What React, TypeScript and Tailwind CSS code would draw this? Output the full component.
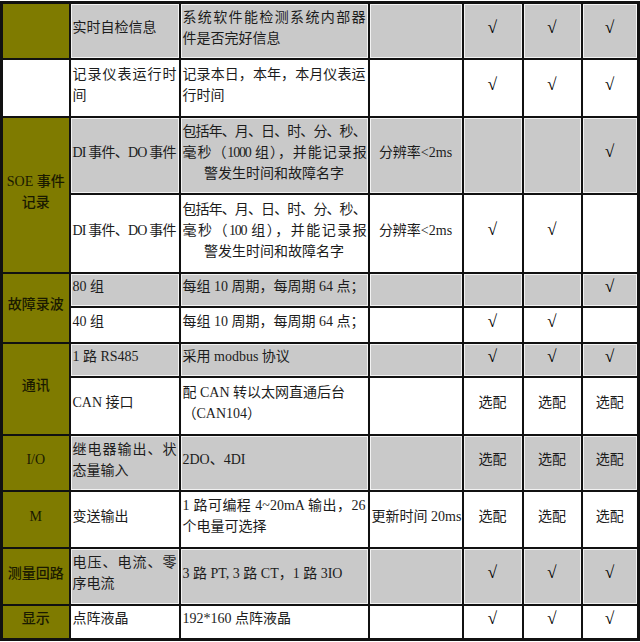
import type { ReactNode } from "react";

// Full-width line, justified to the cell edges.
const J = ({ children, tight }: { children: ReactNode; tight?: boolean }) => (
    <span
        className={`block whitespace-nowrap text-justify [text-align-last:justify] ${tight ? "tracking-[-1.2px]" : ""}`}
    >
        {children}
    </span>
);

const L = ({ children }: { children: ReactNode }) => <span className="block">{children}</span>;

const DiDo = () => <span className="block whitespace-nowrap tracking-[-0.8px]">DI 事件、DO 事件</span>;

type Row = {
    h: string;
    gray: boolean;
    head?: { text: ReactNode; span: number } | "blank";
    name: ReactNode;
    desc: ReactNode;
    note?: ReactNode;
    marks: string[];
};

const rows: Row[] = [
    {
        h: "h-[56px]",
        gray: true,
        head: { text: "", span: 1 },
        name: "实时自检信息",
        desc: (
            <>
                <J>系统软件能检测系统内部器</J>
                <L>件是否完好信息</L>
            </>
        ),
        marks: ["√", "√", "√"],
    },
    {
        h: "h-[58px]",
        gray: false,
        head: "blank",
        name: (
            <>
                <J>记录仪表运行时</J>
                <L>间</L>
            </>
        ),
        desc: (
            <>
                <J>记录本日，本年，本月仪表运</J>
                <L>行时间</L>
            </>
        ),
        marks: ["√", "√", "√"],
    },
    {
        h: "h-[77px]",
        gray: true,
        head: {
            text: (
                <>
                    SOE 事件
                    <br />
                    记录
                </>
            ),
            span: 2,
        },
        name: <DiDo />,
        desc: (
            <>
                <J tight>包括年、月、日、时、分、秒、</J>
                <J tight>毫秒（1000 组），并能记录报</J>
                <span className="block text-center">警发生时间和故障名字</span>
            </>
        ),
        note: "分辨率<2ms",
        marks: ["", "", "√"],
    },
    {
        h: "h-[79px]",
        gray: false,
        name: <DiDo />,
        desc: (
            <>
                <J tight>包括年、月、日、时、分、秒、</J>
                <J tight>毫秒（100 组），并能记录报</J>
                <span className="block text-center">警发生时间和故障名字</span>
            </>
        ),
        note: "分辨率<2ms",
        marks: ["√", "√", ""],
    },
    {
        h: "h-[34px]",
        gray: true,
        head: { text: "故障录波", span: 2 },
        name: "80 组",
        desc: "每组 10 周期，每周期 64 点；",
        marks: ["", "", "√"],
    },
    {
        h: "h-[36px]",
        gray: false,
        name: "40 组",
        desc: "每组 10 周期，每周期 64 点；",
        marks: ["√", "√", ""],
    },
    {
        h: "h-[34px]",
        gray: true,
        head: { text: "通讯", span: 2 },
        name: "1 路 RS485",
        desc: "采用 modbus 协议",
        marks: ["√", "√", "√"],
    },
    {
        h: "h-[58px]",
        gray: false,
        name: "CAN 接口",
        desc: (
            <>
                <L>配 CAN 转以太网直通后台</L>
                <L>（CAN104）</L>
            </>
        ),
        marks: ["选配", "选配", "选配"],
    },
    {
        h: "h-[56px]",
        gray: true,
        head: { text: "I/O", span: 1 },
        name: (
            <>
                <J>继电器输出、状</J>
                <L>态量输入</L>
            </>
        ),
        desc: "2DO、4DI",
        marks: ["选配", "选配", "选配"],
    },
    {
        h: "h-[57px]",
        gray: false,
        head: { text: "M", span: 1 },
        name: "变送输出",
        desc: (
            <>
                <J>1 路可编程 4~20mA 输出，26</J>
                <L>个电量可选择</L>
            </>
        ),
        note: "更新时间 20ms",
        marks: ["选配", "选配", "选配"],
    },
    {
        h: "h-[57px]",
        gray: true,
        head: { text: "测量回路", span: 1 },
        name: (
            <>
                <J>电压、电流、零</J>
                <L>序电流</L>
            </>
        ),
        desc: "3 路 PT, 3 路 CT，1 路 3IO",
        marks: ["√", "√", "√"],
    },
    {
        h: "h-[35px]",
        gray: false,
        head: { text: "显示", span: 1 },
        name: "点阵液晶",
        desc: "192*160 点阵液晶",
        marks: ["√", "√", "√"],
    },
];

export default function App() {
    const cell = "border-2 border-[#111] px-[2px] pt-0 pb-[6px] align-middle";
    return (
        <div
            className="w-[640px] h-[642px] overflow-hidden bg-white pt-[1px] text-[14px] leading-[21px] text-[#1c1c1c]"
            style={{ fontFamily: '"Liberation Serif", "Noto Sans CJK SC", serif' }}
        >
            <table className="w-[637px] table-fixed border-collapse border-[3px] border-[#111]">
                <colgroup>
                    <col className="w-[68px]" />
                    <col className="w-[110px]" />
                    <col className="w-[189px]" />
                    <col className="w-[94px]" />
                    <col className="w-[60px]" />
                    <col className="w-[59px]" />
                    <col className="w-[57px]" />
                </colgroup>
                <tbody>
                    {rows.map((r, i) => {
                        const bg = r.gray ? "bg-[#c9c9c9] shadow-[inset_0_0_0_1px_#f2f2f2]" : "bg-white";
                        return (
                            <tr key={i} className={r.h}>
                                {r.head === "blank" ? (
                                    <td className={`${cell} bg-white`} />
                                ) : r.head ? (
                                    <td
                                        rowSpan={r.head.span}
                                        className={`${cell} bg-[#7f7b00] text-center font-medium text-[#1a1a00]`}
                                    >
                                        {r.head.text}
                                    </td>
                                ) : null}
                                <td className={`${cell} ${bg} text-left`}>{r.name}</td>
                                <td className={`${cell} ${bg} text-left`}>{r.desc}</td>
                                <td className={`${cell} ${bg} text-center whitespace-nowrap`}>{r.note}</td>
                                {r.marks.map((m, j) => (
                                    <td key={j} className={`${cell} ${bg} text-center`}>
                                        {m === "√" ? <span className="text-[17px] text-black">√</span> : m}
                                    </td>
                                ))}
                            </tr>
                        );
                    })}
                </tbody>
            </table>
        </div>
    );
}
